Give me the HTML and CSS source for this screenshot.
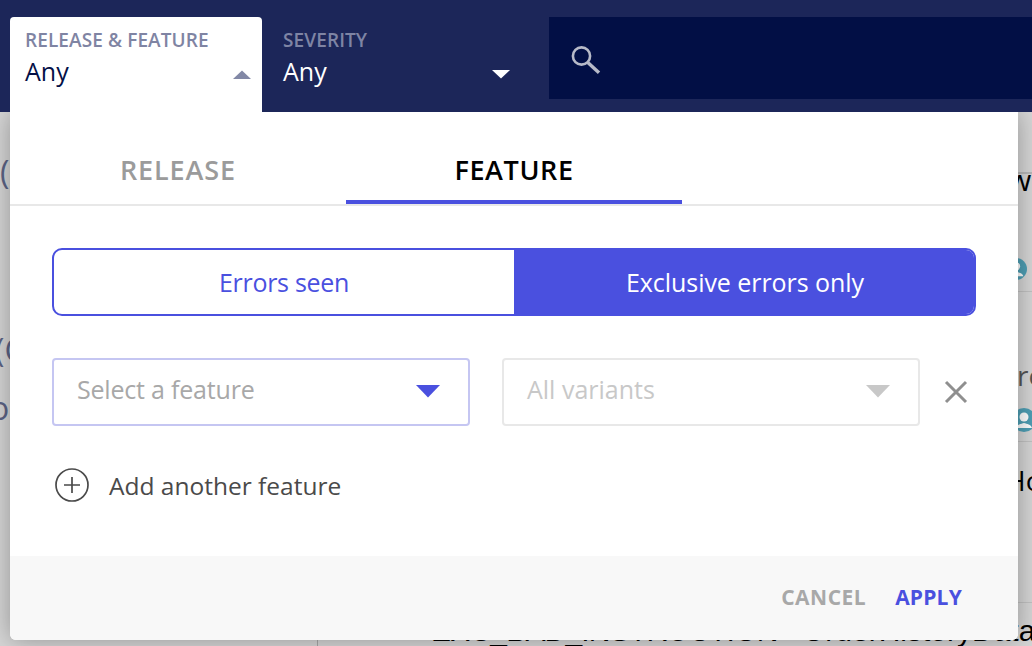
FILE: index.html
```html
<!DOCTYPE html>
<html lang="en">
<head>
<meta charset="utf-8">
<title>Filters</title>
<link rel="stylesheet" href="styles.css">
</head>
<body>
<div class="backdrop">
  <span class="frag frag-paren1">(</span>
  <span class="frag frag-paren2">(C</span>
  <span class="frag frag-o">o</span>
  <span class="frag frag-paren3">)</span>
  <span class="frag-r frag-w">w</span>
  <span class="avatar avatar-1"><svg viewBox="0 0 24 24" width="22" height="22"><circle cx="12" cy="12" r="12" fill="#4f9fb5"/><circle cx="12" cy="9" r="4.500" fill="#fff"/><path d="M4 20c1-4 5-4 8-5 3 1 7 1 8 5z" fill="#fff"/></svg></span>
  <span class="frag-r frag-ro">ro</span>
  <span class="avatar avatar-2"><svg viewBox="0 0 24 24" width="24" height="24"><circle cx="12" cy="12" r="12" fill="#4f9fb5"/><circle cx="12" cy="9" r="4.500" fill="#fff"/><path d="M4 20c1-4 5-4 8-5 3 1 7 1 8 5z" fill="#fff"/></svg></span>
  <span class="frag-r frag-ho">Ho</span>
  <span class="rule rule-1"></span>
  <span class="rule rule-2"></span>
  <span class="rule rule-3"></span>
  <span class="rule rule-4"></span>
  <span class="vline"></span>
  <span class="frag-bottom frag-code">EXC_BAD_INSTRUCTION</span>
  <span class="frag-bottom frag-method">OrderHistoryData</span>
</div>

<header class="topbar">
  <div class="filter filter-open">
    <div class="filter-label">RELEASE &amp; FEATURE</div>
    <div class="filter-row">
      <span class="filter-value">Any</span>
      <svg class="caret" width="18" height="9" viewBox="0 0 18 9"><path d="M9 0.500 18 9H0z" fill="#8288a6"/></svg>
    </div>
  </div>
  <div class="filter filter-sev">
    <div class="filter-label">SEVERITY</div>
    <div class="filter-row">
      <span class="filter-value">Any</span>
      <svg class="caret" width="18" height="9" viewBox="0 0 18 9"><path d="M0 0h18L9 8.500z" fill="#fff"/></svg>
    </div>
  </div>
  <div class="search">
    <svg width="32" height="32" viewBox="0 0 32 32" fill="none" stroke="#b7bac8"><circle cx="11.500" cy="12" r="8.600" stroke-width="2.600"/><path d="M17.800 18.400 29 28.800" stroke-width="3.400"/></svg>
  </div>
</header>

<section class="panel">
  <nav class="tabs">
    <div class="tab tab-release">RELEASE</div>
    <div class="tab tab-active">FEATURE</div>
  </nav>
  <div class="body">
    <div class="segmented">
      <div class="seg">Errors seen</div>
      <div class="seg seg-on">Exclusive errors only</div>
    </div>
    <div class="selects">
      <div class="select select-focus">
        <span class="select-text">Select a feature</span>
        <svg width="24" height="13" viewBox="0 0 24 13"><path d="M0 0h24L12 12.500z" fill="#4a50df"/></svg>
      </div>
      <div class="select select-off">
        <span class="select-text">All variants</span>
        <svg width="24" height="13" viewBox="0 0 24 13"><path d="M0 0h24L12 12.500z" fill="#c8c8c8"/></svg>
      </div>
      <svg class="close" width="24" height="24" viewBox="0 0 24 24" fill="none" stroke="#8f8f8f" stroke-width="3"><path d="M2 2l20 20M22 2 2 22"/></svg>
    </div>
    <div class="add">
      <svg width="34" height="34" viewBox="0 0 34 34" fill="none" stroke="#4a4a4a" stroke-width="1.700"><circle cx="17" cy="17" r="16"/><path d="M17 9v16M9 17h16"/></svg>
      <span>Add another feature</span>
    </div>
  </div>
  <footer class="actions">
    <span class="action action-cancel">CANCEL</span>
    <span class="action action-apply">APPLY</span>
  </footer>
</section>
</body>
</html>
```
FILE: styles.css
```css
* { box-sizing: border-box; }
html, body { margin: 0; height: 100%; }
body {
  width: 1032px;
  height: 646px;
  position: relative;
  overflow: hidden;
  font-family: "Open Sans", "Noto Sans", sans-serif;
  background: #d6d6d6;
}

.topbar {
  height: 112px;
  background: #1c2659;
  display: flex;
  align-items: flex-start;
  padding: 17px 0 0 10px;
  position: relative;
  z-index: 2;
}
.filter { height: 95px; padding: 12px 15px 0; }
.filter-open { width: 252px; background: #fff; border-radius: 4px 4px 0 0; color: #041047; }
.filter-sev { width: 287px; padding-left: 21px; padding-right: 39px; color: #fff; }
.filter-label { font-size: 19px; line-height: 22px; font-weight: 600; color: #7f84a3; letter-spacing: .1px; white-space: nowrap; }
.filter-sev .filter-label { color: #7e84a4; }
.filter-row { display: flex; justify-content: space-between; align-items: center; padding-top: 3px; }
.filter-value { font-size: 25px; line-height: 34px; }
.filter-row .caret { margin: 6px -4px 0 0; }
.filter-sev .caret { margin: 6px 0 0 0; }
.search {
  flex: 1;
  height: 82px;
  background: #020f45;
  display: flex;
  align-items: center;
  padding: 4px 0 0 21px;
}

.panel {
  position: absolute;
  left: 10px;
  top: 112px;
  width: 1008px;
  height: 528px;
  background: #fff;
  border-radius: 0 0 6px 6px;
  display: flex;
  flex-direction: column;
  box-shadow: 0 0 26px rgba(0,0,0,.32);
  overflow: hidden;
}
.tabs {
  height: 94px;
  display: flex;
  border-bottom: 2px solid #e8e8e8;
}
.tab {
  width: 336px;
  height: 92px;
  display: flex;
  align-items: center;
  justify-content: center;
  padding-top: 26px;
  font-size: 27px;
  font-weight: 600;
  letter-spacing: .6px;
  color: #9b9b9b;
  border-bottom: 4px solid transparent;
}
.tab-release { letter-spacing: .9px; }
.tab-active { color: #000; border-bottom-color: #4a50df; }

.body { flex: 1; padding: 42px 42px 0; }
.segmented {
  display: flex;
  height: 68px;
  border: 2px solid #4a50df;
  border-radius: 10px;
  overflow: hidden;
}
.seg {
  display: flex;
  align-items: center;
  justify-content: center;
  width: 460px;
  font-size: 25px;
  font-weight: 500;
  letter-spacing: -.3px;
  color: #4a50df;
}
.seg-on { flex: 1; background: #4a50df; color: #fff; letter-spacing: -.05px; padding-left: 2px; }

.selects { display: flex; align-items: center; margin-top: 42px; gap: 32px; }
.select {
  width: 418px;
  height: 68px;
  border: 2px solid #e8e8e8;
  border-radius: 4px;
  display: flex;
  align-items: center;
  justify-content: space-between;
  padding: 0 28px 0 23px;
  font-size: 25px;
  color: #c8c8c8;
}
.select svg { margin-bottom: 2px; }
.select-text { margin-bottom: 6px; }
.select-focus { border-color: #c5c6f2; color: #a8a8a8; }
.select-focus .select-text { letter-spacing: -.2px; }
.close { margin-left: -8px; }

.add { display: flex; align-items: center; gap: 20px; margin: 42px 0 0 3px; font-size: 24.500px; color: #4a4a4a; }

.actions {
  height: 84px;
  background: #f8f8f8;
  display: flex;
  justify-content: flex-end;
  align-items: center;
  gap: 29px;
  padding: 0 56px 2px 0;
}
.action { font-size: 21px; font-weight: 700; letter-spacing: .4px; }
.action-cancel { color: #a8a8a8; letter-spacing: .5px; }
.action-apply { color: #4a50df; letter-spacing: .2px; }

.backdrop { position: absolute; inset: 112px 0 0 0; background: #d6d6d6; overflow: hidden; }
.frag, .frag-r, .frag-bottom, .avatar, .rule, .vline { position: absolute; }
.frag { color: #5c6486; font-size: 32px; line-height: 36px; white-space: nowrap; }
.frag-paren1 { left: 0; top: 42px; }
.frag-paren2 { left: -5px; top: 220px; }
.frag-o { left: -10px; top: 278px; }
.frag-paren3 { left: -11px; top: 346px; }
.frag-r { font-size: 28px; line-height: 32px; white-space: nowrap; }
.frag-w { left: 1008px; top: 52px; color: #000; font-size: 30px; font-weight: 500; }
.frag-ro { left: 1017px; top: 247px; color: #555; }
.frag-ho { left: 1005px; top: 352px; color: #000; }
.avatar { display: block; }
.avatar-1 { left: 1005px; top: 146px; }
.avatar-2 { left: 1012px; top: 296px; }
.rule { left: 1018px; width: 14px; height: 1px; background: #c2c2c2; }
.rule-1 { top: 60px; height: 2px; background: #b8b8b8; }
.rule-2 { top: 179px; }
.rule-3 { top: 329px; }
.rule-4 { top: 490px; }
.vline { left: 317px; top: 520px; width: 1px; height: 14px; background: #a8a8a8; }
.frag-bottom { top: 502px; font-family: "Liberation Sans", sans-serif; font-size: 30px; line-height: 34px; color: #000; white-space: nowrap; }
.frag-code { left: 431px; letter-spacing: -.8px; }
.frag-method { left: 802px; }
```
